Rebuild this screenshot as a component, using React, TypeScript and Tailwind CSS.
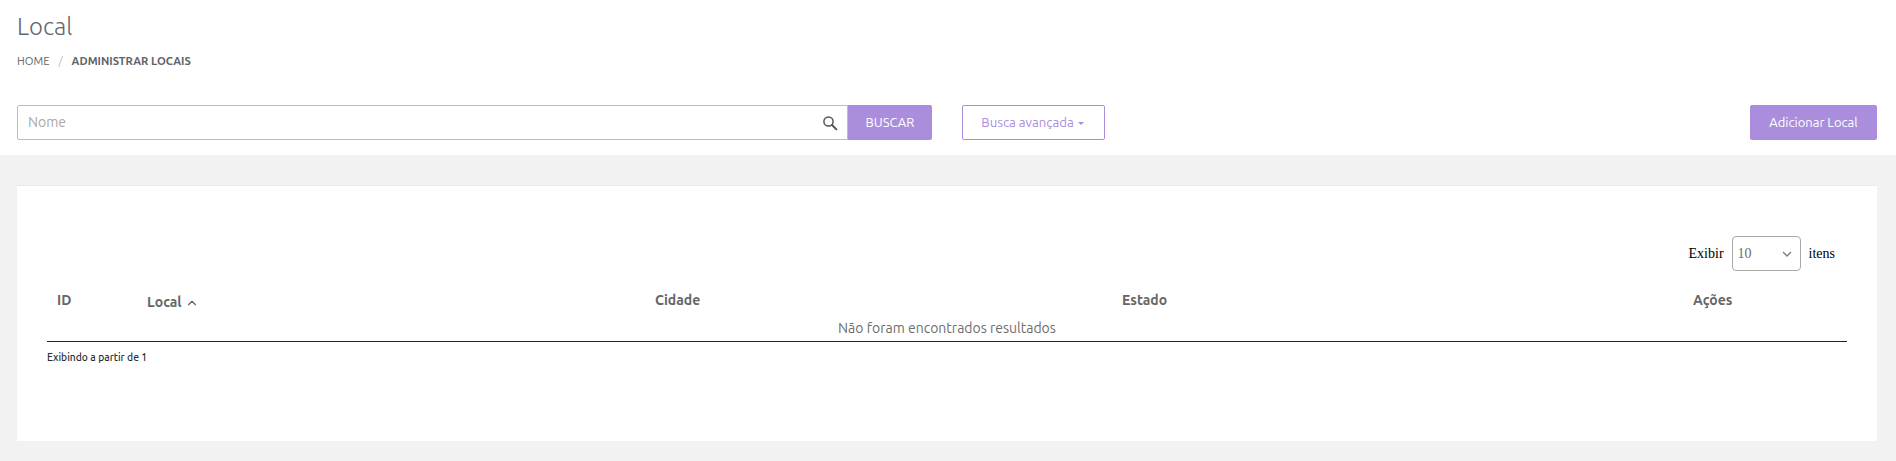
import { ChevronUp } from "lucide-react";

const FONT = "font-['Ubuntu','Noto_Sans','Open_Sans',sans-serif]";

function SearchIcon() {
  return (
    <svg width="16" height="16" viewBox="0 0 16 16" fill="none" className="shrink-0">
      <circle cx="6.5" cy="6.5" r="4.6" stroke="#555" strokeWidth="1.5" />
      <path d="M10 10l4.4 4.4" stroke="#555" strokeWidth="2" strokeLinecap="round" />
    </svg>
  );
}

export default function App() {
  return (
    <main className={`h-[461px] bg-[#f2f2f2] ${FONT}`}>
      {/* HEADER */}
      <header className="h-[155px] bg-white pl-[17px] pr-[19px] pt-[12px]">
        <h1 className="text-[24px] leading-[30px] font-light text-[#5f6773]">Local</h1>
        <div className="mt-[11px] flex items-center text-[11.2px] leading-[16px] text-[#5f6368]">
          <span>HOME</span>
          <span className="mx-[9px] text-[#bbbbbb]">/</span>
          <span className="font-bold">ADMINISTRAR LOCAIS</span>
        </div>

        <div className="mt-[36px] flex h-[35px]">
          <div className="flex w-[831px] items-center rounded-l-[2px] border border-[#bdbdbd] pl-[10px] pr-[9px]">
            <span className="flex-1 text-[14px] text-[#a8a8a8]">Nome</span>
            <SearchIcon />
          </div>
          <button className="w-[84px] rounded-r-[2px] bg-[#ab8ddd] text-[13px] text-white">BUSCAR</button>
          <button className="ml-[30px] flex w-[143px] items-center justify-center gap-[4px] rounded-[2px] border border-[#ab8ddd] pr-[2px] text-[13.2px] text-[#ab8ddd]">
            Busca avançada
            <span className="mt-[1px] border-x-[3px] border-t-[3px] border-x-transparent border-t-[#ab8ddd]" />
          </button>
          <button className="ml-auto w-[127px] rounded-[2px] bg-[#ab8ddd] text-[13px] text-white">Adicionar Local</button>
        </div>
      </header>

      {/* CARD */}
      <section className="ml-[17px] mr-[19px] mt-[30px] h-[256px] border-t border-[#e9e9e9] bg-white pl-[30px] pr-[30px] pt-[50px]">
        <div className="flex h-[35px] items-center justify-end pr-[12px] font-['Liberation_Serif',serif] text-[14px] text-black">
          <span>Exibir</span>
          <div className="mx-[8px] flex h-[35px] w-[69px] items-center justify-between rounded-[4px] border border-[#a9a9a9] pl-[5px] pr-[8px] text-[#6b6b6b]">
            10
            <svg width="10" height="6" viewBox="0 0 10 6" fill="none">
              <path d="M1 1l4 4 4-4" stroke="#777" strokeWidth="1.3" />
            </svg>
          </div>
          <span>itens</span>
        </div>

        <table className="mt-[19px] w-full table-fixed border-b border-[#222222] text-[14px]">
          <thead>
            <tr className="h-[28px] text-left align-top text-[#666666]">
              <th className="w-[90px] pl-[10px] font-bold">ID</th>
              <th className="w-[508px] pl-[10px] font-bold">
                <span className="inline-flex items-center gap-[3px] pt-[2px]">
                  Local
                  <ChevronUp size={14} strokeWidth={2} />
                </span>
              </th>
              <th className="w-[467px] pl-[10px] font-bold">Cidade</th>
              <th className="w-[571px] pl-[10px] font-bold">Estado</th>
              <th className="pl-[10px] font-bold">Ações</th>
            </tr>
          </thead>
          <tbody>
            <tr>
              <td colSpan={5} className="h-[23px] pb-[2px] text-center text-[#6d6d6d]">
                Não foram encontrados resultados
              </td>
            </tr>
          </tbody>
        </table>

        <p className="mt-[8px] text-[10.3px] leading-[14px] font-medium text-[#2b2f38]">Exibindo a partir de 1</p>
      </section>
    </main>
  );
}
